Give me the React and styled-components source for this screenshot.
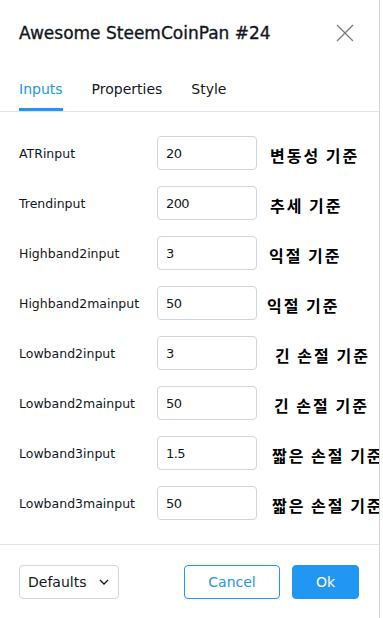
import React from "react";
import styled, { createGlobalStyle } from "styled-components";

const GlobalStyle = createGlobalStyle`
  html, body {
    margin: 0;
    padding: 0;
    background: #ffffff;
  }
  body {
    font-family: "DejaVu Sans", "Noto Sans CJK KR", sans-serif;
    color: #131722;
  }
`;

const inputs = [
  { name: "ATRinput", value: "20", note: "변동성 기준", shift: 13 },
  { name: "Trendinput", value: "200", note: "추세 기준", shift: 13 },
  { name: "Highband2input", value: "3", note: "익절 기준", shift: 12 },
  { name: "Highband2mainput", value: "50", note: "익절 기준", shift: 10 },
  { name: "Lowband2input", value: "3", note: "긴 손절 기준", shift: 18 },
  { name: "Lowband2mainput", value: "50", note: "긴 손절 기준", shift: 17 },
  { name: "Lowband3input", value: "1.5", note: "짧은 손절 기준", shift: 15 },
  { name: "Lowband3mainput", value: "50", note: "짧은 손절 기준", shift: 15 },
];

function App() {
  return (
    <>
      <GlobalStyle />
      <Dialog>
        <Header>
          <Title>Awesome SteemCoinPan #24</Title>
          <CloseButton aria-label="close">
            <svg width="18" height="18" viewBox="0 0 18 18">
              <path
                d="M1 1 L17 17 M17 1 L1 17"
                stroke="#787b86"
                strokeWidth="1.3"
                fill="none"
              />
            </svg>
          </CloseButton>
        </Header>

        <Tabs>
          <Tab active>Inputs</Tab>
          <Tab>Properties</Tab>
          <Tab>Style</Tab>
        </Tabs>

        <Body>
          {inputs.map((row) => (
            <Row key={row.name}>
              <Label>{row.name}</Label>
              <Field defaultValue={row.value} />
              <Note shift={row.shift}>{row.note}</Note>
            </Row>
          ))}
        </Body>

        <Footer>
          <Select>
            Defaults
            <svg width="10" height="6" viewBox="0 0 10 6">
              <path
                d="M1 1 L5 5 L9 1"
                stroke="#131722"
                strokeWidth="1.3"
                fill="none"
              />
            </svg>
          </Select>
          <Actions>
            <Button>Cancel</Button>
            <Button primary>Ok</Button>
          </Actions>
        </Footer>
      </Dialog>
    </>
  );
}

export default App;

const Dialog = styled.div`
  width: 379px;
  height: 618px;
  border-right: 1px solid #d3d4d8;
  display: flex;
  flex-direction: column;
  overflow: hidden;
  background: #ffffff;
`;

const Header = styled.div`
  height: 66px;
  display: flex;
  align-items: center;
  justify-content: space-between;
  padding: 0 20px 0 19px;
  flex-shrink: 0;
`;

const Title = styled.div`
  font-size: 17px;
  color: #131722;
  -webkit-text-stroke: 0.35px #131722;
  white-space: nowrap;
`;

const CloseButton = styled.div`
  width: 28px;
  height: 28px;
  display: flex;
  align-items: center;
  justify-content: center;
`;

const Tabs = styled.div`
  display: flex;
  gap: 29px;
  padding: 0 19px;
  border-bottom: 1px solid #e0e3eb;
  flex-shrink: 0;
`;

const Tab = styled.div`
  height: 45px;
  box-sizing: border-box;
  padding-top: 4px;
  display: flex;
  align-items: center;
  font-size: 14px;
  color: ${(p) => (p.active ? "#2196f3" : "#131722")};
  border-bottom: 3px solid ${(p) => (p.active ? "#2196f3" : "transparent")};
`;

const Body = styled.div`
  display: flex;
  flex-direction: column;
  gap: 16px;
  padding: 24px 0 24px 19px;
  border-bottom: 1px solid #e0e3eb;
  flex-shrink: 0;
`;

const Row = styled.div`
  display: flex;
  align-items: center;
  height: 34px;
  white-space: nowrap;
`;

const Label = styled.div`
  width: 138px;
  flex-shrink: 0;
  font-size: 12.5px;
  color: #131722;
`;

const Field = styled.input`
  width: 100px;
  height: 34px;
  flex-shrink: 0;
  box-sizing: border-box;
  border: 1px solid #d1d4dc;
  border-radius: 4px;
  padding: 0 8px;
  font-family: "DejaVu Sans", sans-serif;
  font-size: 13px;
  letter-spacing: -0.6px;
  color: #131722;
  outline: none;
`;

const Note = styled.div`
  flex-shrink: 0;
  margin-left: ${(p) => p.shift}px;
  margin-top: 3px;
  font-family: "Noto Sans CJK KR", sans-serif;
  font-weight: 700;
  font-size: 16px;
  letter-spacing: 2px;
  color: #000000;
`;

const Footer = styled.div`
  display: flex;
  align-items: center;
  justify-content: space-between;
  padding: 20px 20px 0 19px;
`;

const Select = styled.div`
  width: 100px;
  height: 34px;
  box-sizing: border-box;
  border: 1px solid #d1d4dc;
  border-radius: 4px;
  display: flex;
  align-items: center;
  justify-content: space-between;
  padding: 0 9px 0 8px;
  font-size: 14px;
  color: #131722;
`;

const Actions = styled.div`
  display: flex;
  gap: 12px;
`;

const Button = styled.div`
  width: ${(p) => (p.primary ? "67px" : "96px")};
  height: 34px;
  box-sizing: border-box;
  border: 1px solid #2196f3;
  border-radius: 4px;
  display: flex;
  align-items: center;
  justify-content: center;
  font-size: 14px;
  background: ${(p) => (p.primary ? "#2196f3" : "#ffffff")};
  color: ${(p) => (p.primary ? "#ffffff" : "#2196f3")};
`;
